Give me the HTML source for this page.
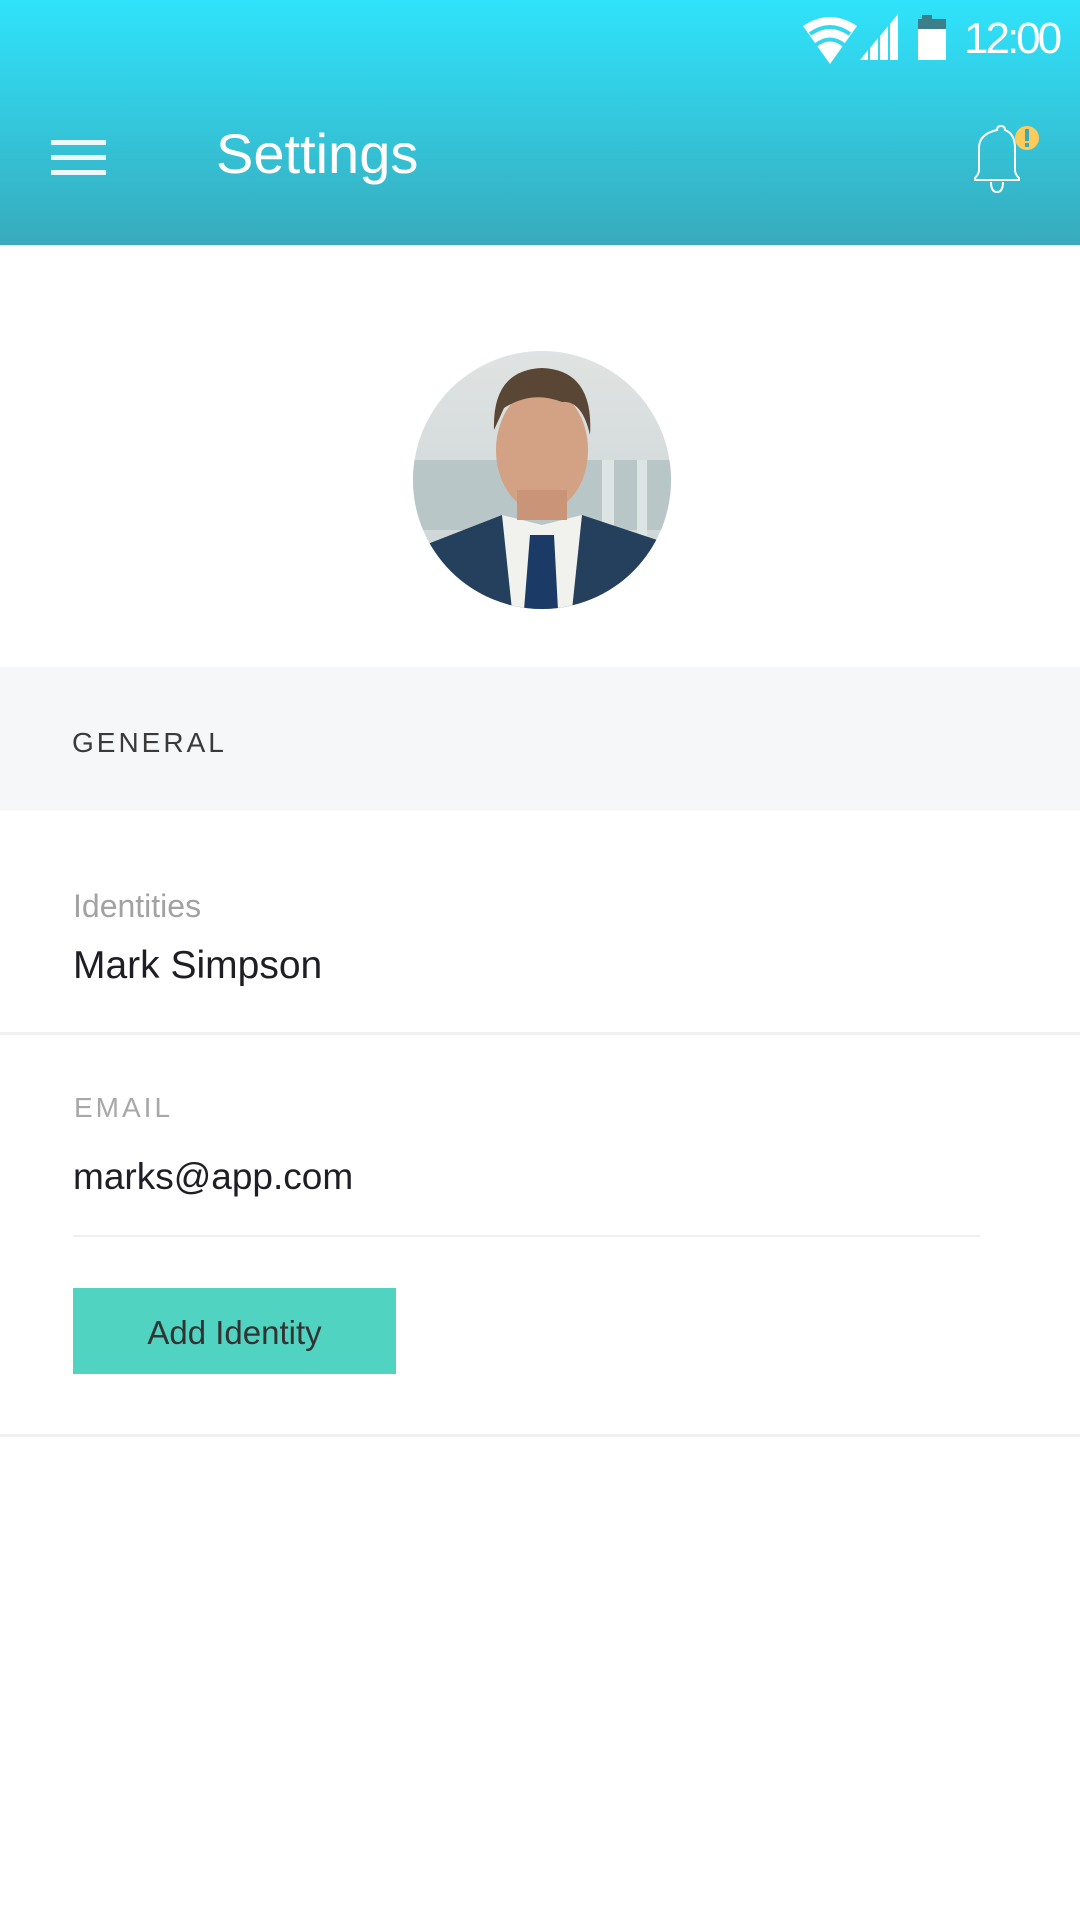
<!DOCTYPE html>
<html><head><meta charset="utf-8"><style>
*{margin:0;padding:0;box-sizing:border-box}
body{width:1080px;height:1920px;background:#fff;font-family:"Liberation Sans",sans-serif;position:relative;overflow:hidden}
.hdr{position:absolute;left:0;top:0;width:1080px;height:245px;background:linear-gradient(#2fe3fb,#38abbd)}
.abs{position:absolute}
.t{position:absolute;white-space:nowrap}
</style></head><body>
<div class="hdr"></div>
<!-- status bar -->
<svg class="abs" style="left:800px;top:12px" width="160" height="56" viewBox="0 0 160 56">
<path d="M30 52 L3 14 Q30 -4 57 14 Z" fill="#fff"/>
<path d="M10 22 Q30 8 50 22" stroke="#33d6ee" stroke-width="4" fill="none"/>
<path d="M16 33 Q30 22 44 33" stroke="#33d6ee" stroke-width="4" fill="none"/>
<path d="M60 48 L68 48 L68 38 Z M70 48 L78 48 L78 26 L70 36 Z M80 48 L88 48 L88 14 L80 24 Z M90 48 L98 48 L98 2 L90 12 Z" fill="#fff"/>
<rect x="122" y="3" width="10" height="5" fill="#3d7f88"/>
<rect x="118" y="7" width="28" height="10" fill="#3d7f88"/>
<rect x="118" y="17" width="28" height="31" fill="#fff"/>
</svg>
<div class="t" style="left:964px;top:14px;font-size:44px;color:#fff;letter-spacing:-3px">12:00</div>
<!-- hamburger -->
<div class="abs" style="left:51px;top:140px;width:55px;height:5px;background:#eaf8fb"></div>
<div class="abs" style="left:51px;top:155px;width:55px;height:5px;background:#eaf8fb"></div>
<div class="abs" style="left:51px;top:170px;width:55px;height:5px;background:#eaf8fb"></div>
<div class="t" style="left:216px;top:121px;font-size:56px;color:#fff">Settings</div>
<!-- bell -->
<svg class="abs" style="left:971px;top:122px" width="70" height="76" viewBox="0 0 70 76">
<path d="M26 8 Q26 4 30 4 Q34 4 34 8 Q44 12 44 26 L44 48 Q44 52 48 56 L48 58 L4 58 L4 56 Q8 52 8 48 L8 26 Q8 12 26 8 Z" fill="none" stroke="#fff" stroke-width="2"/>
<path d="M20 60 Q20 70 26 70 Q32 70 32 60" fill="none" stroke="#fff" stroke-width="2"/>
<circle cx="56" cy="16" r="12" fill="#fdcb5c"/>
<rect x="54" y="7" width="4" height="12" fill="#3aa9b8"/><rect x="54" y="21" width="4" height="4" fill="#3aa9b8"/>
</svg>
<!-- avatar -->
<svg class="abs" style="left:412px;top:350px" width="260" height="260" viewBox="0 0 260 260">
<defs><clipPath id="c"><circle cx="130" cy="130" r="129"/></clipPath>
<linearGradient id="bg" x1="0" y1="0" x2="0" y2="1"><stop offset="0" stop-color="#dfe3e2"/><stop offset="1" stop-color="#c9d3d4"/></linearGradient></defs>
<g clip-path="url(#c)">
<rect width="260" height="260" fill="url(#bg)"/>
<rect x="0" y="110" width="260" height="70" fill="#b9c6c8"/>
<rect x="190" y="110" width="12" height="90" fill="#dde4e4"/><rect x="225" y="110" width="10" height="90" fill="#dde4e4"/>
<path d="M0 200 L90 165 L130 200 L170 165 L260 195 L260 260 L0 260 Z" fill="#25405d"/>
<path d="M90 165 L130 175 L170 165 L160 260 L100 260 Z" fill="#f1f1ee"/>
<path d="M118 185 L142 185 L146 260 L112 260 Z" fill="#1c3a66"/>
<ellipse cx="130" cy="100" rx="46" ry="62" fill="#d3a184"/>
<path d="M82 80 Q80 20 130 18 Q182 20 178 85 Q170 50 150 52 Q120 40 92 58 Z" fill="#5a4634"/>
<rect x="105" y="140" width="50" height="30" fill="#c99477"/>
</g></svg>
<!-- general band -->
<div class="abs" style="left:0;top:667px;width:1080px;height:144px;background:#f6f7f9"></div>
<div class="t" style="left:72px;top:727px;font-size:28px;color:#3a3a3a;letter-spacing:3px">GENERAL</div>
<div class="t" style="left:73px;top:888px;font-size:32px;color:#a2a2a2">Identities</div>
<div class="t" style="left:73px;top:944px;font-size:39px;color:#1e1e24">Mark Simpson</div>
<div class="abs" style="left:0;top:1032px;width:1080px;height:3px;background:#f0f0f0"></div>
<div class="t" style="left:74px;top:1092px;font-size:28px;color:#a8a8a8;letter-spacing:3px">EMAIL</div>
<div class="t" style="left:73px;top:1156px;font-size:37px;color:#1e1e24">marks@app.com</div>
<div class="abs" style="left:73px;top:1235px;width:907px;height:2px;background:#efefef"></div>
<div class="abs" style="left:73px;top:1288px;width:323px;height:86px;background:#50d3c1"></div>
<div class="t" style="left:73px;top:1314px;width:323px;text-align:center;font-size:33px;color:#333">Add Identity</div>
<div class="abs" style="left:0;top:1434px;width:1080px;height:3px;background:#f0f0f0"></div>
</body></html>
